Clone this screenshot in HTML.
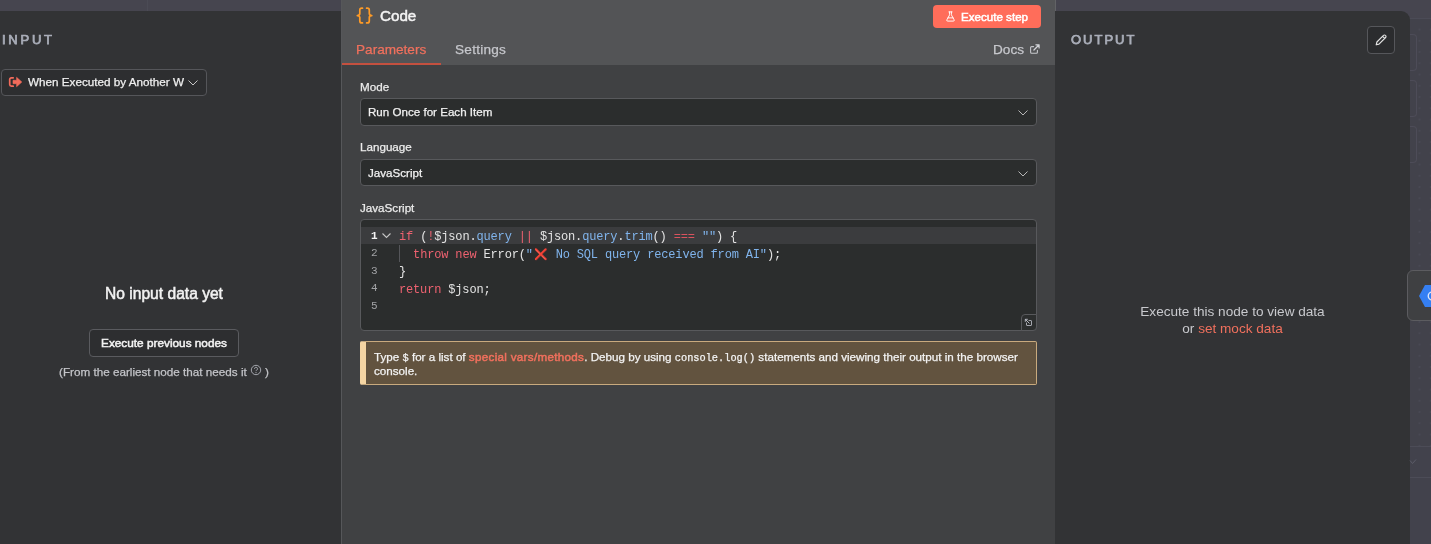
<!DOCTYPE html>
<html><head><meta charset="utf-8">
<style>
*{box-sizing:border-box;margin:0;padding:0}
html,body{width:1431px;height:544px;overflow:hidden}
body{background:#46454f;font-family:"Liberation Sans",sans-serif;color:#e6e6e6;position:relative}
.abs{position:absolute}
#left{left:0;top:11px;width:341px;height:533px;background:#323335}
#right{left:1055px;top:11px;width:355px;height:533px;background:#323335;border-top-right-radius:9px}
#main{left:341px;top:0;width:715px;height:544px;background:#404143;border-left:1px solid #56575a;border-right:1px solid #626366}
#hdr{left:0;top:0;width:713px;height:65px;background:#535456}
.t{position:absolute;white-space:nowrap;line-height:1;will-change:transform}
.sb{-webkit-text-stroke:0.5px currentColor}
.sb2{-webkit-text-stroke:0.75px currentColor}
.md{-webkit-text-stroke:0.25px currentColor}
.sel{position:absolute;left:18px;width:677px;height:28px;background:#2b2d2d;border:1px solid #58595c;border-radius:4px}
.lbl{font-size:11.65px;color:#ececec}
.code{font-family:"Liberation Mono",monospace;font-size:12px;letter-spacing:-0.16px;color:#e4e4e4;white-space:pre}
.k{color:#ee6270}.k2{color:#d9535e}.p{color:#80b4ec}
.ln{font-family:"Liberation Mono",monospace;font-size:11px;color:#a2a3a6}
.mono{font-family:"Liberation Mono",monospace;font-size:10.3px}
</style></head><body>
<div class="abs" style="left:147px;top:0;width:1px;height:11px;background:#4b4b55"></div>
<div id="left" class="abs">
  <div class="t sb2" style="left:2px;top:22px;font-size:13px;letter-spacing:2.75px;color:#a9adb8">INPUT</div>
  <div class="abs" style="left:1px;top:58px;width:206px;height:27px;border:1px solid #55565a;border-radius:4px;background:#2d2e30"></div>
  <svg class="abs" style="left:8px;top:65px" width="15" height="12" viewBox="0 0 15 12"><path d="M5.200 1.800H3.300a1.600 1.600 0 0 0-1.600 1.600v5.200a1.600 1.600 0 0 0 1.600 1.600H5.200" fill="none" stroke="#f26b5b" stroke-width="1.700" stroke-linecap="round"/><path d="M5 4.300H8.600V1.300L13.800 6 8.600 10.700V7.700H5z" fill="#f26b5b" stroke="#f26b5b" stroke-width="0.600" stroke-linejoin="round"/></svg>
  <div class="t md" style="left:28px;top:65.3px;font-size:11.7px;color:#f0f0f0;width:156.2px;height:14px;overflow:hidden">When Executed by Another Workflow</div>
  <svg class="abs" style="left:188px;top:69px" width="10" height="6" viewBox="0 0 10 6"><path d="M0.500 0.500L5 5l4.500-4.500" fill="none" stroke="#c8c8c8" stroke-width="1"/></svg>
  <div class="t sb" style="left:0;width:328px;text-align:center;top:274.7px;font-size:15.6px;color:#f2f2f2">No input data yet</div>
  <div class="abs" style="left:89px;top:318px;width:150px;height:28px;border:1px solid #5a5b5f;border-radius:4px;background:#2d2e30"></div>
  <div class="t sb" style="left:89px;width:150px;text-align:center;top:327px;font-size:11.8px;color:#f2f2f2">Execute previous nodes</div>
  <div class="t md" style="left:59px;top:355px;font-size:11.7px;color:#c4c5c9">(From the earliest node that needs it</div>
  <svg class="abs" style="left:250px;top:353px" width="12" height="12" viewBox="0 0 12 12"><circle cx="6" cy="6" r="4.700" fill="none" stroke="#b0b2ba" stroke-width="0.900"/><path d="M4.500 4.800a1.500 1.500 0 1 1 2.200 1.300c-.5.300-.7.500-.7 1" fill="none" stroke="#b0b2ba" stroke-width="0.900"/><circle cx="6" cy="8.600" r=".55" fill="#b0b2ba"/></svg>
  <div class="t md" style="left:264.5px;top:355px;font-size:11.7px;color:#c4c5c9">)</div>
</div>

<div id="main" class="abs">
  <div id="hdr" class="abs"></div>
  <div class="abs" style="left:0;top:63.3px;width:99px;height:1.7px;background:#c4503f"></div>
  <svg class="abs" style="left:12px;top:5px" width="20" height="20" viewBox="0 0 20 20" fill="none" stroke="#ff9b26" stroke-width="1.7" stroke-linecap="round" stroke-linejoin="round"><path d="M8.500 3.150h-.7a2 2 0 0 0-2 2v3.400a2.500 2 0 0 1-2.500 2 2.500 2 0 0 1 2.500 2v3.400a2 2 0 0 0 2 2h.7"/><path d="M12.600 3.150h.7a2 2 0 0 1 2 2v3.400a2.500 2 0 0 0 2.500 2 2.500 2 0 0 0-2.500 2v3.400a2 2 0 0 1-2 2h-.7"/></svg>
  <div class="t sb" style="left:38.2px;top:8px;font-size:15.2px;color:#f3f3f3">Code</div>
  <div class="t md" style="left:14px;top:42.5px;font-size:13.6px;color:#f0705d">Parameters</div>
  <div class="t md" style="left:113px;top:42.5px;font-size:13.6px;color:#c6c7cc;letter-spacing:0.250px">Settings</div>
  <div class="abs" style="left:591px;top:5px;width:108px;height:23px;background:#ff6d5a;border-radius:4px"></div>
  <svg class="abs" style="left:602.5px;top:11px" width="11" height="11" viewBox="0 0 24 24" fill="none" stroke="#fff" stroke-width="2.1" stroke-linecap="round" stroke-linejoin="round"><path d="M14 2v6a2 2 0 0 0 .245.96l5.510 10.080A2 2 0 0 1 18 22H6a2 2 0 0 1-1.755-2.960l5.510-10.080A2 2 0 0 0 10 8V2"/><path d="M6.453 15h11.094"/><path d="M8.500 2h7"/></svg>
  <div class="t sb" style="left:619.3px;top:10.7px;font-size:11.6px;color:#fff">Execute step</div>
  <div class="t md" style="left:651px;top:42.5px;font-size:13.6px;color:#c6c7cc;letter-spacing:0.05px">Docs</div>
  <svg class="abs" style="left:687.7px;top:44px" width="10" height="11" viewBox="0 0 10 11" fill="none" stroke="#c6c7cc" stroke-width="1.1" stroke-linecap="round" stroke-linejoin="round"><path d="M3.600 2.600H1.600a1 1 0 0 0-1 1V8.300a1 1 0 0 0 1 1H6.400a1 1 0 0 0 1-1V6.300"/><path d="M3.900 6L8.900 1M5.900 .8H9.100V4" stroke="#d4d5da" stroke-width="1.200"/></svg>

  <div class="t lbl md" style="left:18px;top:81px">Mode</div>
  <div class="sel" style="top:98px"></div>
  <div class="t md" style="left:26px;top:106px;font-size:11.6px;color:#f2f2f2">Run Once for Each Item</div>
  <svg class="abs" style="left:676px;top:110px" width="10" height="6" viewBox="0 0 10 6"><path d="M0.500 0.500L5 5l4.500-4.500" fill="none" stroke="#b8b8b8" stroke-width="1"/></svg>

  <div class="t lbl md" style="left:18px;top:141px">Language</div>
  <div class="sel" style="top:159px;height:27px"></div>
  <div class="t md" style="left:26px;top:167px;font-size:11.6px;color:#f2f2f2">JavaScript</div>
  <svg class="abs" style="left:676px;top:170.5px" width="10" height="6" viewBox="0 0 10 6"><path d="M0.500 0.500L5 5l4.500-4.500" fill="none" stroke="#b8b8b8" stroke-width="1"/></svg>

  <div class="t lbl md" style="left:18px;top:202px">JavaScript</div>
  <div class="abs" style="left:18px;top:219px;width:677px;height:112px;background:#2b2d2d;border:1px solid #58595c;border-radius:4px;overflow:hidden">
    <div class="abs" style="left:0;top:7px;width:675px;height:17px;background:#3b3c3e"></div>
    <div class="abs" style="left:38px;top:25px;width:1px;height:17px;background:#55565a"></div>
    <div class="t ln" style="left:10px;top:11px;color:#f2f2f2;font-weight:bold">1</div>
    <svg class="abs" style="left:21px;top:13px" width="9" height="6" viewBox="0 0 9 6"><path d="M0.500.5L4.500 4.500l4-4" fill="none" stroke="#c4c4c4" stroke-width="1.100"/></svg>
    <div class="t ln" style="left:10px;top:28px">2</div>
    <div class="t ln" style="left:10px;top:45.5px">3</div>
    <div class="t ln" style="left:10px;top:63px">4</div>
    <div class="t ln" style="left:10px;top:80.5px">5</div>
    <div class="t code" style="left:38px;top:11px"><span class="k">if</span> (<span class="k">!</span>$json.<span class="p">query</span> <span class="k">||</span> $json.<span class="p">query</span>.<span class="p">trim</span>() <span class="k2">===</span> <span class="p">""</span>) {</div>
    <div class="t code" style="left:38px;top:28.5px">  <span class="k">throw</span> <span class="k">new</span> Error(<span class="p">"</span><span style="color:#f33d55;display:inline-block;width:15.8px;text-align:center;font-size:11px">❌</span><span class="p"> No SQL query received from AI"</span>);</div>
    <div class="t code" style="left:38px;top:46px">}</div>
    <div class="t code" style="left:38px;top:63.5px"><span class="k">return</span> $json;</div>
  </div>
  <div class="abs" style="left:679px;top:314px;width:16px;height:17px;background:#2c2e2e;border:1px solid #58595c;border-radius:4px 0 4px 0"></div>
  <svg class="abs" style="left:682px;top:318px" width="10" height="10" viewBox="0 0 10 10" fill="none" stroke="#a4a6ae" stroke-width="1" stroke-linecap="round" stroke-linejoin="round"><path d="M5 2.500H7a.5.500 0 0 1 .5.500V7a.5.500 0 0 1-.5.500H3a.5.500 0 0 1-.5-.5V5"/><path d="M5.200 5.200L1.300 1.300M1.300 3.400V1.300H3.400" stroke="#b6b8c0"/></svg>

  <div class="abs" style="left:18px;top:341px;width:677px;height:44px;background:#62533f;border:1px solid #c9aa7e;border-left:6px solid #f5d5a3;border-radius:2px"></div>
  <div class="t md" style="left:32px;top:351px;font-size:11.65px;color:#f3f3f3">Type <span class="mono">$</span> for a list of <span class="sb" style="color:#f0705d;letter-spacing:0.3px">special vars/methods</span>. Debug by using <span class="mono">console.log()</span> statements and viewing their output in the browser</div>
  <div class="t md" style="left:32px;top:365px;font-size:11.65px;color:#f3f3f3">console.</div>
</div>

<div id="right" class="abs">
  <div class="t sb2" style="left:16px;top:22px;font-size:13px;letter-spacing:2px;color:#a9adb8">OUTPUT</div>
  <div class="abs" style="left:312px;top:15px;width:28px;height:28px;border:1px solid #56575b;border-radius:4px;background:#2b2c2e"></div>
  <svg class="abs" style="left:319px;top:22px" width="14" height="14" viewBox="0 0 14 14"><path d="M2.200 11.800l.7-2.800 6.600-6.600a1.300 1.300 0 0 1 1.900 0l.2.200a1.300 1.300 0 0 1 0 1.900L5 11.100zM8.600 3.300l2.100 2.100" fill="none" stroke="#e4e4e4" stroke-width="1.150" stroke-linejoin="round"/></svg>
  <div class="t" style="left:0;width:355px;text-align:center;top:293.5px;font-size:13.6px;color:#c8c9cd">Execute this node to view data</div>
  <div class="t" style="left:0;width:355px;text-align:center;top:310.5px;font-size:13.6px;color:#c8c9cd">or <span style="color:#f0705d">set mock data</span></div>
</div>

<!-- right canvas strip -->
<div class="abs" style="left:1410px;top:18px;width:21px;height:526px;background:#42424b;border-top:1px solid #4b4b56;background-image:radial-gradient(circle,#494954 0.6px,transparent 1.1px);background-size:11.25px 11.25px;background-position:3.9px 4.9px"></div>
<div class="abs" style="left:1410px;top:34px;width:7px;height:37px;border:1px solid #4d4c58;border-left:none;border-radius:0 4px 4px 0;background:#42424b"></div>
<div class="abs" style="left:1410px;top:80px;width:7px;height:37px;border:1px solid #4d4c58;border-left:none;border-radius:0 4px 4px 0;background:#42424b"></div>
<div class="abs" style="left:1410px;top:126px;width:7px;height:37px;border:1px solid #4d4c58;border-left:none;border-radius:0 4px 4px 0;background:#42424b"></div>
<div class="abs" style="left:1407px;top:270px;width:30px;height:51px;border:1px solid #5c5c60;border-radius:6px;background:#3f4042"></div>
<svg class="abs" style="left:1419px;top:284px" width="12" height="24" viewBox="0 0 12 24"><path d="M0 12L6 1h6v22H6z" fill="#357ff2"/><circle cx="13.200" cy="12" r="4" fill="none" stroke="#dfe9fb" stroke-width="1.300"/></svg>
<div class="abs" style="left:1410px;top:446px;width:21px;height:98px;background:#42424c;border-top:1px solid #4c4c57"></div>
<div class="abs" style="left:1410px;top:477px;width:21px;height:1px;background:#4c4c57"></div>
<svg class="abs" style="left:1409px;top:459px" width="8" height="6" viewBox="0 0 8 6"><path d="M1 1.500L3.500 4.500 7 0.500" fill="none" stroke="#5c5c68" stroke-width="1"/></svg>
</body></html>
